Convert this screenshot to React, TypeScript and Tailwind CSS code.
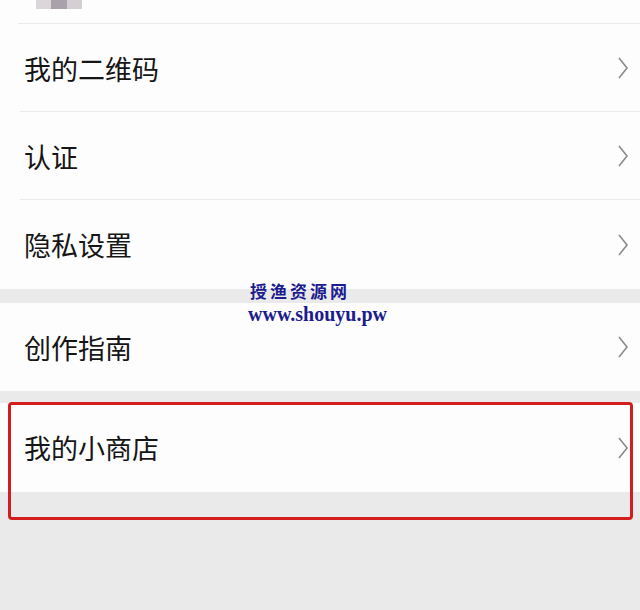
import React from 'react';

const font = { fontFamily: '"Noto Sans CJK SC", "Noto Sans", sans-serif' };

function Chevron() {
  return (
    <svg width="12" height="24" viewBox="0 0 12 24" className="mr-[11px] shrink-0">
      <path d="M2 2 L10 12 L2 22" fill="none" stroke="#8a8a8a" strokeWidth="1.6" strokeLinejoin="miter" />
    </svg>
  );
}

function Row({ label, divider = true, h = 'h-[88px]' }: { label: string; divider?: boolean; h?: string }) {
  return (
    <div className={`relative flex items-center justify-between bg-[#fefdfe] ${h}`}>
      <span className="pl-[24px] text-[27px] leading-none text-[#161616]" style={font}>
        {label}
      </span>
      <Chevron />
      {divider && <div className="absolute bottom-0 left-[20px] right-0 h-px bg-[#ebe9eb]" />}
    </div>
  );
}

export default function App() {
  return (
    <div className="relative h-[610px] w-[640px] overflow-hidden bg-[#ebeaeb]" style={font}>
      {/* 상단 프로필 영역 (흐림) */}
      <div className="relative h-[24px] bg-[#fefdfe]">
        <div className="flex h-[9px] pl-[36px]">
          <div className="w-[15px] bg-[#dad6da]" />
          <div className="w-[16px] bg-[#a9a2aa]" />
          <div className="w-[15px] bg-[#d3cfd3]" />
        </div>
        <div className="absolute bottom-0 left-[18px] right-0 h-px bg-[#ebe9eb]" />
      </div>
      <Row label="我的二维码" />
      <Row label="认证" />
      <Row label="隐私设置" divider={false} h="h-[89px]" />
      <div className="h-[14px]" />
      <Row label="创作指南" divider={false} />
      <div className="h-[12px]" />
      <Row label="我的小商店" divider={false} h="h-[89px]" />

      {/* 강조 박스 */}
      <div className="absolute left-[8px] top-[402px] h-[118px] w-[625px] rounded-[4px] border-[3px] border-[#d21e1e]" />

      {/* 워터마크 */}
      <div className="absolute left-[248px] top-[281px] flex flex-col items-start">
        <div className="pl-[2px] text-[17px] font-bold leading-[20px] tracking-[3px] text-[#1c1c8e]" style={font}>
          授渔资源网
        </div>
        <div
          className="mt-[2px] text-[20px] font-bold leading-[22px] text-[#1c1c8e]"
          style={{ fontFamily: '"Liberation Serif", serif' }}
        >
          www.shouyu.pw
        </div>
      </div>
    </div>
  );
}
